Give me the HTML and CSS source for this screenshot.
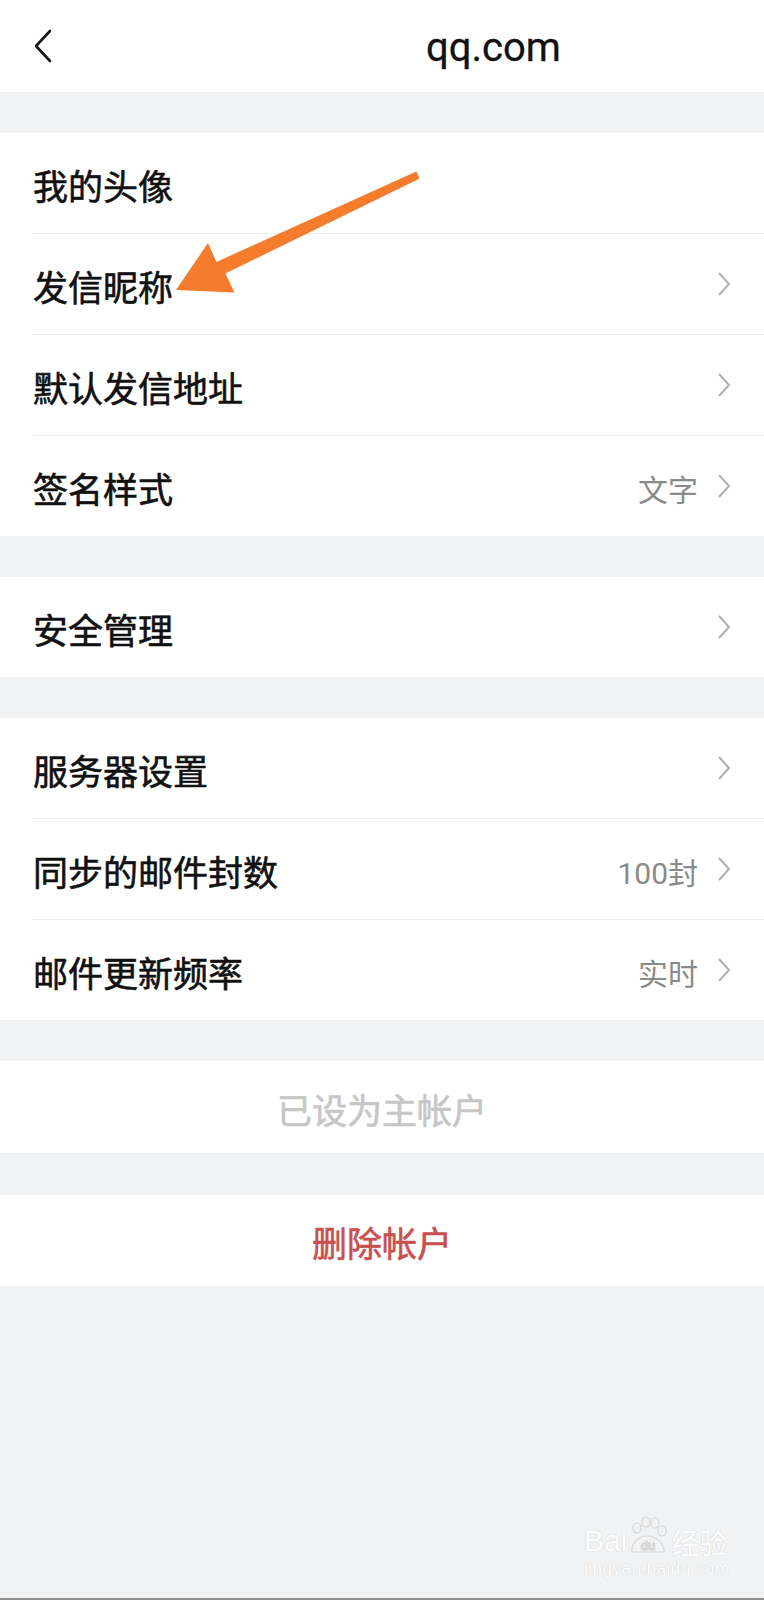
FILE: index.html
```html
<!DOCTYPE html>
<html lang="zh-CN">
<head>
    <meta charset="UTF-8">
    <meta name="viewport" content="width=device-width, initial-scale=1.0">
    <title>帐户设置</title>
    <link rel="stylesheet" href="styles.css">
</head>
<body>
<div class="page">

    <header class="topbar">
        <button class="back-btn" aria-label="返回">
            <svg width="20" height="34" viewBox="0 0 20 34"><path d="M17 2 L3 17 L17 32" fill="none" stroke="#151515" stroke-width="2.6" stroke-linecap="round" stroke-linejoin="round"/></svg>
        </button>
        <div class="title">qq.com</div>
    </header>

    <section class="group">
        <div class="row">
            <span class="label">我的头像</span>
        </div>
        <div class="row">
            <span class="label">发信昵称</span>
            <svg class="chev" width="14" height="26" viewBox="0 0 14 26"><path d="M2 2 L12 13 L2 24"/></svg>
        </div>
        <div class="row">
            <span class="label">默认发信地址</span>
            <svg class="chev" width="14" height="26" viewBox="0 0 14 26"><path d="M2 2 L12 13 L2 24"/></svg>
        </div>
        <div class="row">
            <span class="label">签名样式</span>
            <span class="value">文字</span>
            <svg class="chev" width="14" height="26" viewBox="0 0 14 26"><path d="M2 2 L12 13 L2 24"/></svg>
        </div>
    </section>

    <section class="group">
        <div class="row">
            <span class="label">安全管理</span>
            <svg class="chev" width="14" height="26" viewBox="0 0 14 26"><path d="M2 2 L12 13 L2 24"/></svg>
        </div>
    </section>

    <section class="group">
        <div class="row">
            <span class="label">服务器设置</span>
            <svg class="chev" width="14" height="26" viewBox="0 0 14 26"><path d="M2 2 L12 13 L2 24"/></svg>
        </div>
        <div class="row">
            <span class="label">同步的邮件封数</span>
            <span class="value">100封</span>
            <svg class="chev" width="14" height="26" viewBox="0 0 14 26"><path d="M2 2 L12 13 L2 24"/></svg>
        </div>
        <div class="row">
            <span class="label">邮件更新频率</span>
            <span class="value">实时</span>
            <svg class="chev" width="14" height="26" viewBox="0 0 14 26"><path d="M2 2 L12 13 L2 24"/></svg>
        </div>
    </section>

    <section class="group action">
        <div class="action-text muted">已设为主帐户</div>
    </section>

    <section class="group action">
        <div class="action-text danger">删除帐户</div>
    </section>

    <!-- annotation arrow drawn over the list -->
    <svg class="pointer" width="764" height="320" viewBox="0 0 764 320">
        <polygon fill="#f57b2d" points="416.3,171.6 419.7,178.4 225.4,273.5 234.5,292.5 176,290 208,243 216.4,261.9"/>
    </svg>

    <div class="watermark">
        <div class="wm-logo">
            <span>Bai</span>
            <svg width="42" height="40" viewBox="0 0 42 40">
                <ellipse cx="10" cy="12" rx="4" ry="5" fill="none" stroke="#d6d6d6" stroke-width="1.2"/>
                <ellipse cx="19" cy="6" rx="4" ry="5" fill="none" stroke="#d6d6d6" stroke-width="1.2"/>
                <ellipse cx="28" cy="7" rx="4" ry="5" fill="none" stroke="#d6d6d6" stroke-width="1.2"/>
                <ellipse cx="35" cy="15" rx="4" ry="5" fill="none" stroke="#d6d6d6" stroke-width="1.2"/>
                <path d="M5 36 C4 26 13 20 20 20 C28 20 38 27 37 36 Z" fill="none" stroke="#d6d6d6" stroke-width="1.2"/>
                <text x="21" y="34" text-anchor="middle" font-family="Liberation Sans, sans-serif" font-size="13" fill="#fff" stroke="#d6d6d6" stroke-width="0.5">du</text>
            </svg>
            <span class="wm-cn">经验</span>
        </div>
        <div class="wm-url">jingyan.baidu.com</div>
    </div>

</div>
</body>
</html>
```

FILE: styles.css
```css
* {
    box-sizing: border-box;
}

body {
    margin: 0;
    background: #f1f2f4;
    font-family: "Noto Sans CJK SC", "Noto Sans", sans-serif;
    color: #111;
}

.page {
    position: relative;
    min-height: 100vh;
    border-bottom: 2px solid #8f8f8f;
    overflow: hidden;
}

.topbar {
    height: 92px;
    background: #fff;
    display: flex;
    align-items: center;
    padding-left: 33px;
}

.back-btn {
    background: none;
    border: none;
    padding: 0;
    width: 20px;
    height: 34px;
    display: flex;
    cursor: pointer;
}

.title {
    margin-left: 373px;
    font-family: Roboto, "Open Sans", sans-serif;
    font-size: 40px;
    color: #111;
    margin-top: 2px;
    -webkit-text-stroke: 0.3px #111;
}

.group {
    background: #fff;
    margin-top: 41px;
}

.row {
    height: 100px;
    display: flex;
    align-items: center;
    padding: 0 33px;
}

.row + .row {
    border-top: 1px solid #eeeeee;
    margin-left: 33px;
    padding-left: 0;
    height: 101px;
}

.label {
    font-size: 35px;
    flex: 1;
    padding-top: 3px;
    -webkit-text-stroke: 0.6px #111;
}

.value {
    font-family: Roboto, "Noto Sans CJK SC", sans-serif;
    font-size: 30px;
    color: #8a8a8a;
    margin-right: 19px;
    padding-top: 3px;
}

.chev path {
    fill: none;
    stroke: #b0b0b0;
    stroke-width: 2;
}

.action {
    height: 92px;
    display: flex;
    align-items: center;
    justify-content: center;
}

.action + .action {
    margin-top: 42px;
    height: 91px;
}

.action-text {
    font-size: 35px;
    padding-top: 2px;
    -webkit-text-stroke: 0.6px currentColor;
}

.muted {
    color: #c6c6c6;
}

.danger {
    color: #c8504f;
}

.pointer {
    position: absolute;
    top: 0;
    left: 0;
    pointer-events: none;
}

.watermark {
    position: absolute;
    left: 584px;
    top: 1516px;
    color: #fff;
    text-shadow: 0 0 1px #bdbdbd;
}

.wm-logo {
    display: flex;
    align-items: flex-end;
    font-family: "Liberation Sans", sans-serif;
    font-size: 30px;
    line-height: 1;
}

.wm-cn {
    font-family: "Noto Sans CJK SC", sans-serif;
    font-size: 28px;
    margin-left: 2px;
}

.wm-url {
    font-family: "Liberation Sans", sans-serif;
    font-size: 17px;
    letter-spacing: 0.5px;
    margin-top: 3px;
}
```
